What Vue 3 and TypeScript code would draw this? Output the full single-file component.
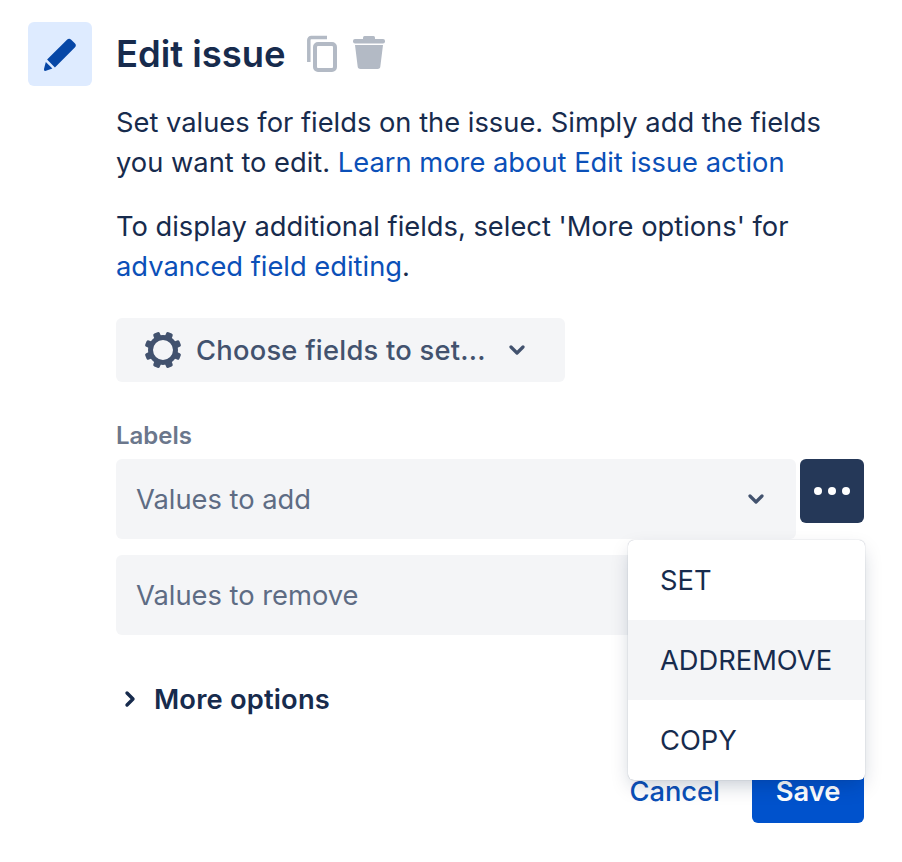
<script setup lang="ts">
import { ref } from 'vue';

const menuItems = ref(['SET', 'ADDREMOVE', 'COPY']);
const hovered = 'ADDREMOVE';
const toothAngles = [22.5, 67.5, 112.5, 157.5, 202.5, 247.5, 292.5, 337.5];
</script>

<template>
  <div class="panel">
    <div class="tile">
      <svg width="36" height="36" viewBox="0 0 36 36">
        <path d="M5.100 23.600L25 3.700Q27.100 1.600 29.200 3.700L32.800 7.300Q34.900 9.400 32.800 11.500L12.900 31.400z" fill="#0747a6" />
        <path d="M3.800 26L10.400 32.600 4 34.800Q1.500 35.300 2 33z" fill="#0747a6" />
      </svg>
    </div>

    <div class="body">
      <div class="title-row">
        <h1>Edit issue</h1>
        <svg class="copy" width="32" height="38" viewBox="0 0 32 38">
          <path d="M2.800 27V5A2.500 2.500 0 0 1 5.300 2.500H21" fill="none" stroke="#b3bac5" stroke-width="3.500" />
          <rect x="9" y="9" width="20" height="26" rx="3" fill="none" stroke="#b3bac5" stroke-width="4" />
        </svg>
        <svg class="trash" width="32" height="33" viewBox="0 0 32 33">
          <rect x="10" y="0" width="12" height="5" rx="1.500" fill="#b3bac5" />
          <rect x="0" y="3" width="32" height="4.500" rx="2" fill="#b3bac5" />
          <path d="M2 9H30L27.400 30A3 3 0 0 1 24.400 33H7.600A3 3 0 0 1 4.600 30z" fill="#b3bac5" />
        </svg>
      </div>

      <p class="desc">
        Set values for fields on the issue. Simply add the fields you want to edit.
        <a href="#">Learn more about Edit issue action</a>
      </p>
      <p class="desc second">
        To display additional fields, select 'More options' for
        <a href="#">advanced field editing</a>.
      </p>

      <button class="choose" type="button">
        <svg width="38" height="38" viewBox="0 0 38 38">
          <circle cx="19" cy="19" r="12.500" fill="none" stroke="#42526e" stroke-width="5" />
          <rect
            v-for="a in toothAngles"
            :key="a"
            x="15.500"
            y="0.500"
            width="7"
            height="8"
            rx="1.800"
            fill="#42526e"
            :transform="`rotate(${a} 19 19)`"
          />
        </svg>
        <span>Choose fields to set...</span>
        <svg class="chev" width="16" height="10" viewBox="0 0 16 10">
          <path d="M2 2l6 6 6-6" fill="none" stroke="#42526e" stroke-width="3.200" stroke-linecap="round" stroke-linejoin="round" />
        </svg>
      </button>

      <div class="field-label">Labels</div>

      <div class="field-row">
        <div class="select">
          <span>Values to add</span>
          <svg class="chev" width="16" height="10" viewBox="0 0 16 10">
            <path d="M2 2l6 6 6-6" fill="none" stroke="#42526e" stroke-width="3.200" stroke-linecap="round" stroke-linejoin="round" />
          </svg>
        </div>
        <button class="more" type="button">
          <i></i><i></i><i></i>
        </button>

        <ul class="menu">
          <li v-for="item in menuItems" :key="item" :class="{ active: item === hovered }">{{ item }}</li>
        </ul>
      </div>

      <div class="select remove">
        <span>Values to remove</span>
      </div>

      <div class="more-options">
        <svg width="14" height="18" viewBox="0 0 14 18">
          <path d="M3 3l6 6-6 6" fill="none" stroke="#172b4d" stroke-width="3.400" stroke-linecap="round" stroke-linejoin="round" />
        </svg>
        <span>More options</span>
      </div>

      <div class="actions">
        <a href="#" class="cancel">Cancel</a>
        <button class="save" type="button">Save</button>
      </div>
    </div>
  </div>
</template>

<style>
body {
  background: #fff;
}
</style>

<style scoped>
.panel {
  display: flex;
  gap: 24px;
  padding: 22px 38px 0 28px;
  width: 902px;
  height: 862px;
  box-sizing: border-box;
  font-family: Inter, "Noto Sans", sans-serif;
  font-size: 27.3px;
  color: #172b4d;
  overflow: hidden;
}

.tile {
  flex: none;
  width: 64px;
  height: 64px;
  border-radius: 6px;
  background: #deebff;
  display: flex;
  align-items: center;
  justify-content: center;
}

.body {
  flex: 1;
  min-width: 0;
}

.title-row {
  display: flex;
  align-items: center;
  height: 64px;
}

h1 {
  margin: 0;
  font-size: 36.4px;
  font-weight: 600;
}

.copy {
  margin-left: 20px;
}

.trash {
  margin-left: 15px;
  margin-top: -4px;
}

.desc {
  margin: 17px 0 0;
  line-height: 40px;
  width: 720px;
}

.desc.second {
  margin-top: 24px;
}

.desc a {
  color: #0b50b8;
  text-decoration: none;
}

.choose {
  display: flex;
  align-items: center;
  margin-top: 31px;
  height: 64px;
  width: 449px;
  padding: 0 0 0 28px;
  border: none;
  border-radius: 6px;
  background: #f4f5f7;
  font: inherit;
  font-weight: 500;
  letter-spacing: 0.25px;
  color: #42526e;
}

.choose span {
  margin-left: 14px;
}

.choose .chev {
  margin-left: 23px;
}

.field-label {
  margin-top: 40px;
  font-size: 24px;
  line-height: 28px;
  font-weight: 600;
  color: #6b778c;
}

.field-row {
  position: relative;
  display: flex;
  align-items: flex-start;
  gap: 4px;
  margin-top: 9px;
}

.select {
  display: flex;
  align-items: center;
  justify-content: space-between;
  box-sizing: border-box;
  width: 680px;
  height: 80px;
  padding: 0 32px 0 20px;
  border-radius: 6px;
  background: #f4f5f7;
  color: #5e6c84;
}

.select.remove {
  margin-top: 16px;
}

.more {
  display: flex;
  align-items: center;
  justify-content: center;
  gap: 6px;
  width: 64px;
  height: 64px;
  padding: 0;
  border: none;
  border-radius: 6px;
  background: #253858;
}

.more i {
  width: 8px;
  height: 8px;
  border-radius: 50%;
  background: #fff;
}

.menu {
  position: absolute;
  z-index: 2;
  top: 81px;
  left: 512px;
  width: 237px;
  margin: 0;
  padding: 0;
  list-style: none;
  background: #fff;
  border-radius: 6px;
  overflow: hidden;
  box-shadow: 0 8px 20px -4px rgba(9, 30, 66, 0.25), 0 0 1px rgba(9, 30, 66, 0.4);
}

.menu li {
  height: 80px;
  line-height: 81px;
  padding-left: 32px;
}

.menu li.active {
  background: #f4f5f7;
}

.more-options {
  display: flex;
  align-items: center;
  gap: 16px;
  margin-top: 44px;
  height: 40px;
  padding-left: 8px;
  font-weight: 600;
  letter-spacing: 0.18px;
}

.actions {
  display: flex;
  align-items: center;
  justify-content: flex-end;
  gap: 32px;
  margin-top: 40px;
}

.cancel {
  color: #0b50b8;
  font-weight: 500;
  text-decoration: none;
}

.save {
  width: 112px;
  height: 64px;
  border: none;
  border-radius: 6px;
  background: #0052cc;
  color: #fff;
  font: inherit;
  font-weight: 600;
}
</style>
